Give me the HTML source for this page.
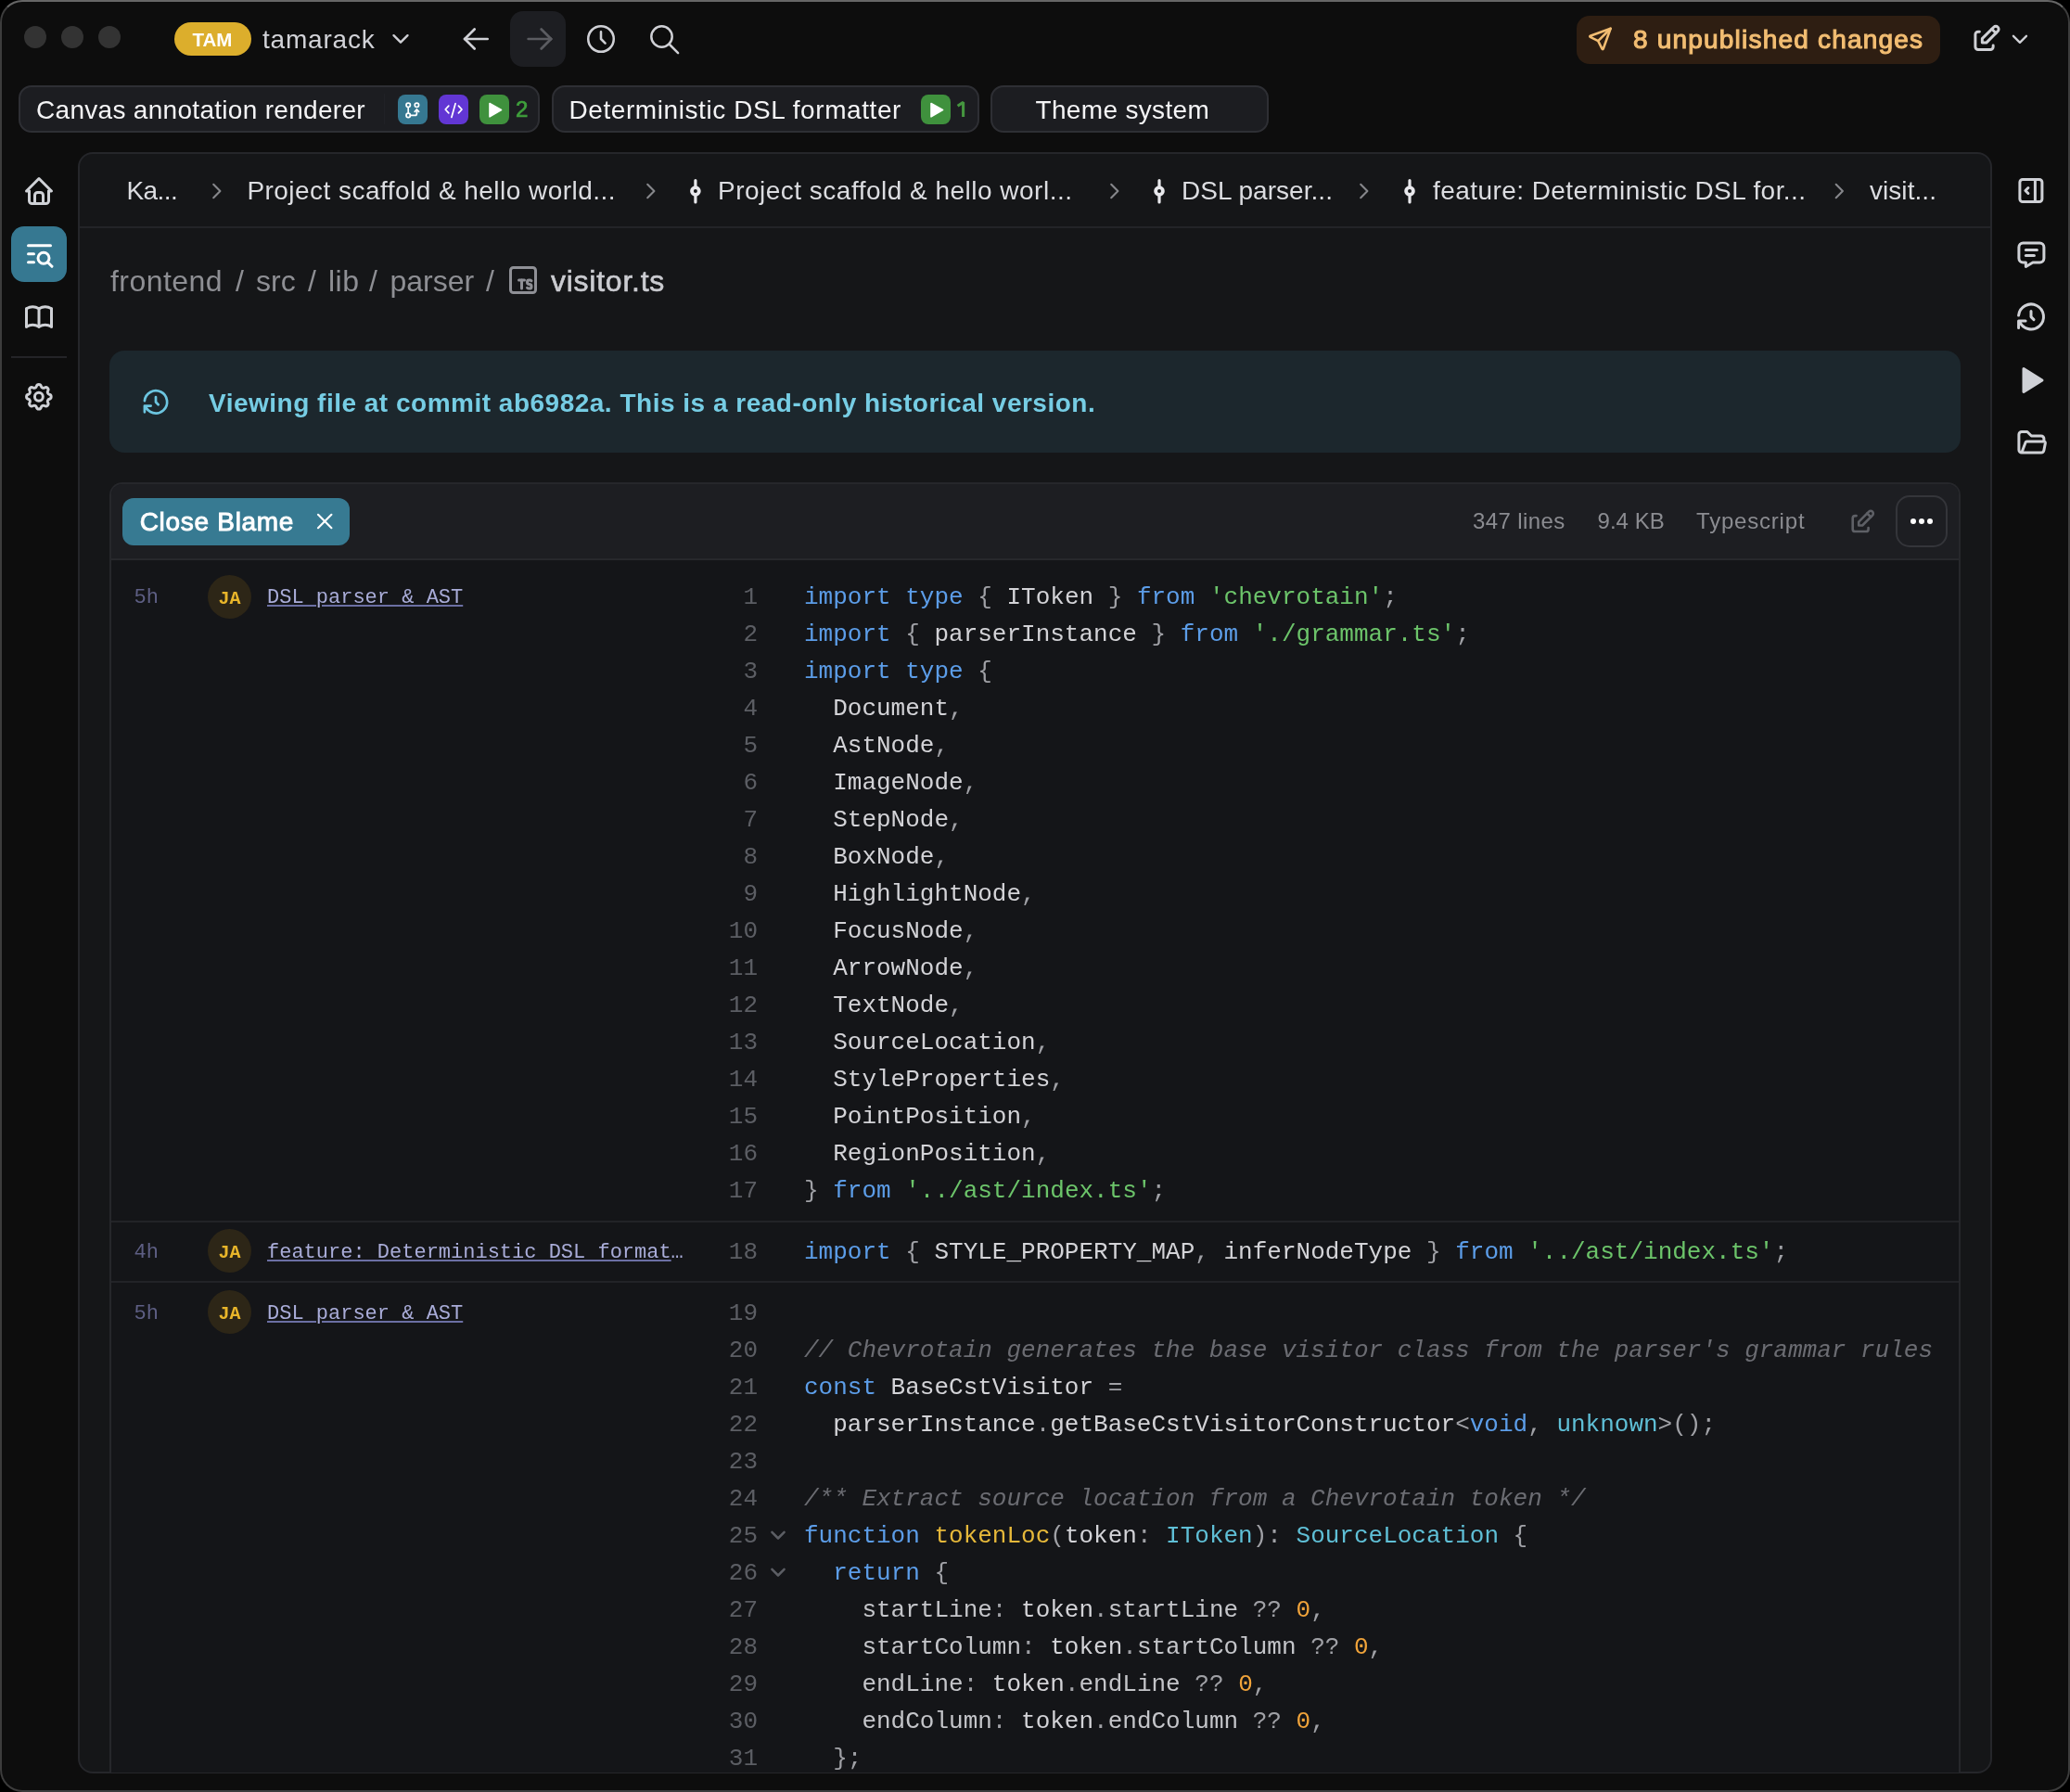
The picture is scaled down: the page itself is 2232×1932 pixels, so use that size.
<!DOCTYPE html>
<html><head><meta charset="utf-8"><style>
html,body{margin:0;padding:0;background:#000;}
body{width:2232px;height:1932px;position:relative;overflow:hidden;font-family:'Liberation Sans', sans-serif;will-change:transform;}
</style></head><body>
<div style="position:absolute;left:0px;top:0px;width:2232px;height:1932px;box-sizing:border-box;background:#0d0d0d;border:2px solid #3c3c3c;border-radius:24px;border-top-color:#666"></div>
<div style="position:absolute;left:26px;top:28px;width:24px;height:24px;border-radius:50%;background:#333"></div>
<div style="position:absolute;left:66px;top:28px;width:24px;height:24px;border-radius:50%;background:#333"></div>
<div style="position:absolute;left:106px;top:28px;width:24px;height:24px;border-radius:50%;background:#333"></div>
<div style="position:absolute;left:188px;top:24px;width:83px;height:36px;box-sizing:border-box;background:#dcae2c;border-radius:18px;"></div>
<div style="position:absolute;left:207.5px;top:32.65px;font-family:'Liberation Sans', sans-serif;font-size:20.5px;line-height:20.5px;color:#fff;font-weight:700;letter-spacing:0px;white-space:pre;">TAM</div>
<div style="position:absolute;left:283px;top:29.30px;font-family:'Liberation Sans', sans-serif;font-size:28px;line-height:28px;color:#d1d2d7;font-weight:400;letter-spacing:0.8px;white-space:pre;">tamarack</div>
<div style="position:absolute;left:550px;top:12px;width:60px;height:60px;box-sizing:border-box;background:#1d1e22;border-radius:14px;"></div>
<div style="position:absolute;left:1700px;top:17px;width:392px;height:52px;box-sizing:border-box;background:#2e1e12;border-radius:14px;"></div>
<div style="position:absolute;left:1761px;top:29.30px;font-family:'Liberation Sans', sans-serif;font-size:28px;line-height:28px;color:#f2bd72;font-weight:400;letter-spacing:1.2px;white-space:pre;-webkit-text-stroke:1.1px #f2bd72">8 unpublished changes</div>
<div style="position:absolute;left:20px;top:92px;width:562px;height:51px;box-sizing:border-box;background:#1c1d21;border:2px solid #2e2f34;border-radius:14px;"></div>
<div style="position:absolute;left:595px;top:92px;width:461px;height:51px;box-sizing:border-box;background:#1c1d21;border:2px solid #2e2f34;border-radius:14px;"></div>
<div style="position:absolute;left:1068px;top:92px;width:300px;height:51px;box-sizing:border-box;background:#1c1d21;border:2px solid #2e2f34;border-radius:14px;"></div>
<div style="position:absolute;left:39px;top:105.30px;font-family:'Liberation Sans', sans-serif;font-size:28px;line-height:28px;color:#f4f4f6;font-weight:400;letter-spacing:0.3px;white-space:pre;">Canvas annotation renderer</div>
<div style="position:absolute;left:414px;top:101px;width:1px;height:33px;background:#202126"></div>
<div style="position:absolute;left:429px;top:102px;width:32px;height:32px;box-sizing:border-box;background:#367891;border-radius:8px;"></div>
<div style="position:absolute;left:473px;top:102px;width:32px;height:32px;box-sizing:border-box;background:#6236d4;border-radius:8px;"></div>
<div style="position:absolute;left:517px;top:102px;width:32px;height:32px;box-sizing:border-box;background:#3f913d;border-radius:8px;"></div>
<div style="position:absolute;left:556px;top:105.68px;font-family:'Liberation Sans', sans-serif;font-size:24px;line-height:24px;color:#3fa03c;font-weight:400;letter-spacing:0px;white-space:pre;-webkit-text-stroke:0.7px #3fa03c">2</div>
<div style="position:absolute;left:613.5px;top:105.30px;font-family:'Liberation Sans', sans-serif;font-size:28px;line-height:28px;color:#f4f4f6;font-weight:400;letter-spacing:0.58px;white-space:pre;">Deterministic DSL formatter</div>
<div style="position:absolute;left:993px;top:102px;width:32px;height:32px;box-sizing:border-box;background:#3f913d;border-radius:8px;"></div>
<div style="position:absolute;left:1116.5px;top:105.30px;font-family:'Liberation Sans', sans-serif;font-size:28px;line-height:28px;color:#f4f4f6;font-weight:400;letter-spacing:0.33px;white-space:pre;">Theme system</div>
<div style="position:absolute;left:12px;top:244px;width:60px;height:60px;box-sizing:border-box;background:#367891;border-radius:14px;"></div>
<div style="position:absolute;left:12px;top:384px;width:60px;height:2px;background:#242428"></div>
<div style="position:absolute;left:84px;top:164px;width:2064px;height:1748px;box-sizing:border-box;background:#151618;border:2px solid #25262a;border-radius:16px;"></div>
<div style="position:absolute;left:86px;top:244px;width:2060px;height:2px;background:#232428"></div>
<div style="position:absolute;left:136.5px;top:192.00px;font-family:'Liberation Sans', sans-serif;font-size:28px;line-height:28px;color:#dcdde1;font-weight:400;letter-spacing:-0.6px;white-space:pre;">Ka...</div>
<div style="position:absolute;left:266.4px;top:192.00px;font-family:'Liberation Sans', sans-serif;font-size:28px;line-height:28px;color:#dcdde1;font-weight:400;letter-spacing:0.46px;white-space:pre;">Project scaffold &amp; hello world...</div>
<div style="position:absolute;left:774px;top:192.00px;font-family:'Liberation Sans', sans-serif;font-size:28px;line-height:28px;color:#dcdde1;font-weight:400;letter-spacing:0.49px;white-space:pre;">Project scaffold &amp; hello worl...</div>
<div style="position:absolute;left:1274px;top:192.00px;font-family:'Liberation Sans', sans-serif;font-size:28px;line-height:28px;color:#dcdde1;font-weight:400;letter-spacing:0.05px;white-space:pre;">DSL parser...</div>
<div style="position:absolute;left:1545px;top:192.00px;font-family:'Liberation Sans', sans-serif;font-size:28px;line-height:28px;color:#dcdde1;font-weight:400;letter-spacing:0.44px;white-space:pre;">feature: Deterministic DSL for...</div>
<div style="position:absolute;left:2016px;top:192.00px;font-family:'Liberation Sans', sans-serif;font-size:28px;line-height:28px;color:#dcdde1;font-weight:400;letter-spacing:0.05px;white-space:pre;">visit...</div>
<div style="position:absolute;left:119px;top:286.91px;font-family:'Liberation Sans', sans-serif;font-size:32px;line-height:32px;color:#8e8f94;font-weight:400;letter-spacing:0.45px;white-space:pre;">frontend</div>
<div style="position:absolute;left:254px;top:286.91px;font-family:'Liberation Sans', sans-serif;font-size:32px;line-height:32px;color:#8e8f94;font-weight:400;letter-spacing:0px;white-space:pre;">/</div>
<div style="position:absolute;left:276px;top:286.91px;font-family:'Liberation Sans', sans-serif;font-size:32px;line-height:32px;color:#8e8f94;font-weight:400;letter-spacing:0px;white-space:pre;">src</div>
<div style="position:absolute;left:332px;top:286.91px;font-family:'Liberation Sans', sans-serif;font-size:32px;line-height:32px;color:#8e8f94;font-weight:400;letter-spacing:0px;white-space:pre;">/</div>
<div style="position:absolute;left:354px;top:286.91px;font-family:'Liberation Sans', sans-serif;font-size:32px;line-height:32px;color:#8e8f94;font-weight:400;letter-spacing:0.5px;white-space:pre;">lib</div>
<div style="position:absolute;left:398px;top:286.91px;font-family:'Liberation Sans', sans-serif;font-size:32px;line-height:32px;color:#8e8f94;font-weight:400;letter-spacing:0px;white-space:pre;">/</div>
<div style="position:absolute;left:420.5px;top:286.91px;font-family:'Liberation Sans', sans-serif;font-size:32px;line-height:32px;color:#8e8f94;font-weight:400;letter-spacing:0px;white-space:pre;">parser</div>
<div style="position:absolute;left:524px;top:286.91px;font-family:'Liberation Sans', sans-serif;font-size:32px;line-height:32px;color:#8e8f94;font-weight:400;letter-spacing:0px;white-space:pre;">/</div>
<div style="position:absolute;left:594px;top:286.91px;font-family:'Liberation Sans', sans-serif;font-size:32px;line-height:32px;color:#cbccd1;font-weight:400;letter-spacing:0.75px;white-space:pre;-webkit-text-stroke:0.6px #cbccd1">visitor.ts</div>
<div style="position:absolute;left:118px;top:378px;width:1996px;height:110px;box-sizing:border-box;background:#1c272d;border-radius:16px;"></div>
<div style="position:absolute;left:225px;top:420.60px;font-family:'Liberation Sans', sans-serif;font-size:28px;line-height:28px;color:#76cde4;font-weight:700;letter-spacing:0.5px;white-space:pre;">Viewing file at commit ab6982a. This is a read-only historical version.</div>
<div style="position:absolute;left:118px;top:520px;width:1996px;height:1391px;box-sizing:border-box;border:2px solid #26272b;border-bottom:none;border-radius:14px 14px 0 0;background:#141518;overflow:hidden"><div style="position:absolute;left:0;top:0;right:0;height:80px;background:#1d1e22;border-bottom:2px solid #27282c"></div></div>
<div style="position:absolute;left:132px;top:537px;width:245px;height:51px;box-sizing:border-box;background:#377a92;border-radius:12px;"></div>
<div style="position:absolute;left:150.7px;top:548.80px;font-family:'Liberation Sans', sans-serif;font-size:28px;line-height:28px;color:#fff;font-weight:400;letter-spacing:0.7px;white-space:pre;-webkit-text-stroke:0.9px #fff">Close Blame</div>
<div style="position:absolute;left:1588px;top:550.18px;font-family:'Liberation Sans', sans-serif;font-size:24px;line-height:24px;color:#8b8c91;font-weight:400;letter-spacing:0.4px;white-space:pre;">347 lines</div>
<div style="position:absolute;left:1722.5px;top:550.18px;font-family:'Liberation Sans', sans-serif;font-size:24px;line-height:24px;color:#8b8c91;font-weight:400;letter-spacing:0.05px;white-space:pre;">9.4 KB</div>
<div style="position:absolute;left:1829px;top:550.18px;font-family:'Liberation Sans', sans-serif;font-size:24px;line-height:24px;color:#8b8c91;font-weight:400;letter-spacing:0.8px;white-space:pre;">Typescript</div>
<div style="position:absolute;left:2044px;top:534px;width:56px;height:56px;box-sizing:border-box;background:transparent;border:2px solid #34353a;border-radius:15px;"></div>
<div style="position:absolute;left:2059.5px;top:559px;width:6px;height:6px;border-radius:50%;background:#fff"></div>
<div style="position:absolute;left:2068.5px;top:559px;width:6px;height:6px;border-radius:50%;background:#fff"></div>
<div style="position:absolute;left:2077.5px;top:559px;width:6px;height:6px;border-radius:50%;background:#fff"></div>
<div style="position:absolute;left:120px;top:1316px;width:1992px;height:2px;background:#222327"></div>
<div style="position:absolute;left:120px;top:1381px;width:1992px;height:2px;background:#222327"></div>
<div style="position:absolute;left:717px;width:100px;top:624.07px;height:40px;line-height:40px;text-align:right;font-family:'Liberation Mono', monospace;font-size:26px;color:#5c5e64">1</div>
<div style="position:absolute;left:867px;top:624.07px;height:40px;line-height:40px;font-family:'Liberation Mono', monospace;font-size:26px;white-space:pre"><span style="color:#5c9de8">import</span><span style="color:#d3d3d7"> </span><span style="color:#5c9de8">type</span><span style="color:#a0a1a6"> { </span><span style="color:#d3d3d7">IToken</span><span style="color:#a0a1a6"> } </span><span style="color:#5c9de8">from</span><span style="color:#d3d3d7"> </span><span style="color:#6cc46a">'chevrotain'</span><span style="color:#a0a1a6">;</span></div>
<div style="position:absolute;left:717px;width:100px;top:664.07px;height:40px;line-height:40px;text-align:right;font-family:'Liberation Mono', monospace;font-size:26px;color:#5c5e64">2</div>
<div style="position:absolute;left:867px;top:664.07px;height:40px;line-height:40px;font-family:'Liberation Mono', monospace;font-size:26px;white-space:pre"><span style="color:#5c9de8">import</span><span style="color:#a0a1a6"> { </span><span style="color:#d3d3d7">parserInstance</span><span style="color:#a0a1a6"> } </span><span style="color:#5c9de8">from</span><span style="color:#d3d3d7"> </span><span style="color:#6cc46a">'./grammar.ts'</span><span style="color:#a0a1a6">;</span></div>
<div style="position:absolute;left:717px;width:100px;top:704.07px;height:40px;line-height:40px;text-align:right;font-family:'Liberation Mono', monospace;font-size:26px;color:#5c5e64">3</div>
<div style="position:absolute;left:867px;top:704.07px;height:40px;line-height:40px;font-family:'Liberation Mono', monospace;font-size:26px;white-space:pre"><span style="color:#5c9de8">import</span><span style="color:#d3d3d7"> </span><span style="color:#5c9de8">type</span><span style="color:#a0a1a6"> {</span></div>
<div style="position:absolute;left:717px;width:100px;top:744.07px;height:40px;line-height:40px;text-align:right;font-family:'Liberation Mono', monospace;font-size:26px;color:#5c5e64">4</div>
<div style="position:absolute;left:867px;top:744.07px;height:40px;line-height:40px;font-family:'Liberation Mono', monospace;font-size:26px;white-space:pre"><span style="color:#d3d3d7">  Document</span><span style="color:#a0a1a6">,</span></div>
<div style="position:absolute;left:717px;width:100px;top:784.07px;height:40px;line-height:40px;text-align:right;font-family:'Liberation Mono', monospace;font-size:26px;color:#5c5e64">5</div>
<div style="position:absolute;left:867px;top:784.07px;height:40px;line-height:40px;font-family:'Liberation Mono', monospace;font-size:26px;white-space:pre"><span style="color:#d3d3d7">  AstNode</span><span style="color:#a0a1a6">,</span></div>
<div style="position:absolute;left:717px;width:100px;top:824.07px;height:40px;line-height:40px;text-align:right;font-family:'Liberation Mono', monospace;font-size:26px;color:#5c5e64">6</div>
<div style="position:absolute;left:867px;top:824.07px;height:40px;line-height:40px;font-family:'Liberation Mono', monospace;font-size:26px;white-space:pre"><span style="color:#d3d3d7">  ImageNode</span><span style="color:#a0a1a6">,</span></div>
<div style="position:absolute;left:717px;width:100px;top:864.07px;height:40px;line-height:40px;text-align:right;font-family:'Liberation Mono', monospace;font-size:26px;color:#5c5e64">7</div>
<div style="position:absolute;left:867px;top:864.07px;height:40px;line-height:40px;font-family:'Liberation Mono', monospace;font-size:26px;white-space:pre"><span style="color:#d3d3d7">  StepNode</span><span style="color:#a0a1a6">,</span></div>
<div style="position:absolute;left:717px;width:100px;top:904.07px;height:40px;line-height:40px;text-align:right;font-family:'Liberation Mono', monospace;font-size:26px;color:#5c5e64">8</div>
<div style="position:absolute;left:867px;top:904.07px;height:40px;line-height:40px;font-family:'Liberation Mono', monospace;font-size:26px;white-space:pre"><span style="color:#d3d3d7">  BoxNode</span><span style="color:#a0a1a6">,</span></div>
<div style="position:absolute;left:717px;width:100px;top:944.07px;height:40px;line-height:40px;text-align:right;font-family:'Liberation Mono', monospace;font-size:26px;color:#5c5e64">9</div>
<div style="position:absolute;left:867px;top:944.07px;height:40px;line-height:40px;font-family:'Liberation Mono', monospace;font-size:26px;white-space:pre"><span style="color:#d3d3d7">  HighlightNode</span><span style="color:#a0a1a6">,</span></div>
<div style="position:absolute;left:717px;width:100px;top:984.07px;height:40px;line-height:40px;text-align:right;font-family:'Liberation Mono', monospace;font-size:26px;color:#5c5e64">10</div>
<div style="position:absolute;left:867px;top:984.07px;height:40px;line-height:40px;font-family:'Liberation Mono', monospace;font-size:26px;white-space:pre"><span style="color:#d3d3d7">  FocusNode</span><span style="color:#a0a1a6">,</span></div>
<div style="position:absolute;left:717px;width:100px;top:1024.07px;height:40px;line-height:40px;text-align:right;font-family:'Liberation Mono', monospace;font-size:26px;color:#5c5e64">11</div>
<div style="position:absolute;left:867px;top:1024.07px;height:40px;line-height:40px;font-family:'Liberation Mono', monospace;font-size:26px;white-space:pre"><span style="color:#d3d3d7">  ArrowNode</span><span style="color:#a0a1a6">,</span></div>
<div style="position:absolute;left:717px;width:100px;top:1064.07px;height:40px;line-height:40px;text-align:right;font-family:'Liberation Mono', monospace;font-size:26px;color:#5c5e64">12</div>
<div style="position:absolute;left:867px;top:1064.07px;height:40px;line-height:40px;font-family:'Liberation Mono', monospace;font-size:26px;white-space:pre"><span style="color:#d3d3d7">  TextNode</span><span style="color:#a0a1a6">,</span></div>
<div style="position:absolute;left:717px;width:100px;top:1104.07px;height:40px;line-height:40px;text-align:right;font-family:'Liberation Mono', monospace;font-size:26px;color:#5c5e64">13</div>
<div style="position:absolute;left:867px;top:1104.07px;height:40px;line-height:40px;font-family:'Liberation Mono', monospace;font-size:26px;white-space:pre"><span style="color:#d3d3d7">  SourceLocation</span><span style="color:#a0a1a6">,</span></div>
<div style="position:absolute;left:717px;width:100px;top:1144.07px;height:40px;line-height:40px;text-align:right;font-family:'Liberation Mono', monospace;font-size:26px;color:#5c5e64">14</div>
<div style="position:absolute;left:867px;top:1144.07px;height:40px;line-height:40px;font-family:'Liberation Mono', monospace;font-size:26px;white-space:pre"><span style="color:#d3d3d7">  StyleProperties</span><span style="color:#a0a1a6">,</span></div>
<div style="position:absolute;left:717px;width:100px;top:1184.07px;height:40px;line-height:40px;text-align:right;font-family:'Liberation Mono', monospace;font-size:26px;color:#5c5e64">15</div>
<div style="position:absolute;left:867px;top:1184.07px;height:40px;line-height:40px;font-family:'Liberation Mono', monospace;font-size:26px;white-space:pre"><span style="color:#d3d3d7">  PointPosition</span><span style="color:#a0a1a6">,</span></div>
<div style="position:absolute;left:717px;width:100px;top:1224.07px;height:40px;line-height:40px;text-align:right;font-family:'Liberation Mono', monospace;font-size:26px;color:#5c5e64">16</div>
<div style="position:absolute;left:867px;top:1224.07px;height:40px;line-height:40px;font-family:'Liberation Mono', monospace;font-size:26px;white-space:pre"><span style="color:#d3d3d7">  RegionPosition</span><span style="color:#a0a1a6">,</span></div>
<div style="position:absolute;left:717px;width:100px;top:1264.07px;height:40px;line-height:40px;text-align:right;font-family:'Liberation Mono', monospace;font-size:26px;color:#5c5e64">17</div>
<div style="position:absolute;left:867px;top:1264.07px;height:40px;line-height:40px;font-family:'Liberation Mono', monospace;font-size:26px;white-space:pre"><span style="color:#a0a1a6">} </span><span style="color:#5c9de8">from</span><span style="color:#d3d3d7"> </span><span style="color:#6cc46a">'../ast/index.ts'</span><span style="color:#a0a1a6">;</span></div>
<div style="position:absolute;left:717px;width:100px;top:1329.87px;height:40px;line-height:40px;text-align:right;font-family:'Liberation Mono', monospace;font-size:26px;color:#5c5e64">18</div>
<div style="position:absolute;left:867px;top:1329.87px;height:40px;line-height:40px;font-family:'Liberation Mono', monospace;font-size:26px;white-space:pre"><span style="color:#5c9de8">import</span><span style="color:#a0a1a6"> { </span><span style="color:#d3d3d7">STYLE_PROPERTY_MAP</span><span style="color:#a0a1a6">, </span><span style="color:#d3d3d7">inferNodeType</span><span style="color:#a0a1a6"> } </span><span style="color:#5c9de8">from</span><span style="color:#d3d3d7"> </span><span style="color:#6cc46a">'../ast/index.ts'</span><span style="color:#a0a1a6">;</span></div>
<div style="position:absolute;left:717px;width:100px;top:1395.87px;height:40px;line-height:40px;text-align:right;font-family:'Liberation Mono', monospace;font-size:26px;color:#5c5e64">19</div>
<div style="position:absolute;left:867px;top:1395.87px;height:40px;line-height:40px;font-family:'Liberation Mono', monospace;font-size:26px;white-space:pre"></div>
<div style="position:absolute;left:717px;width:100px;top:1435.87px;height:40px;line-height:40px;text-align:right;font-family:'Liberation Mono', monospace;font-size:26px;color:#5c5e64">20</div>
<div style="position:absolute;left:867px;top:1435.87px;height:40px;line-height:40px;font-family:'Liberation Mono', monospace;font-size:26px;white-space:pre"><span style="color:#6b6c72;font-style:italic">// Chevrotain generates the base visitor class from the parser's grammar rules</span></div>
<div style="position:absolute;left:717px;width:100px;top:1475.87px;height:40px;line-height:40px;text-align:right;font-family:'Liberation Mono', monospace;font-size:26px;color:#5c5e64">21</div>
<div style="position:absolute;left:867px;top:1475.87px;height:40px;line-height:40px;font-family:'Liberation Mono', monospace;font-size:26px;white-space:pre"><span style="color:#5c9de8">const</span><span style="color:#d3d3d7"> BaseCstVisitor </span><span style="color:#a0a1a6">=</span></div>
<div style="position:absolute;left:717px;width:100px;top:1515.87px;height:40px;line-height:40px;text-align:right;font-family:'Liberation Mono', monospace;font-size:26px;color:#5c5e64">22</div>
<div style="position:absolute;left:867px;top:1515.87px;height:40px;line-height:40px;font-family:'Liberation Mono', monospace;font-size:26px;white-space:pre"><span style="color:#d3d3d7">  parserInstance</span><span style="color:#a0a1a6">.</span><span style="color:#d3d3d7">getBaseCstVisitorConstructor</span><span style="color:#a0a1a6">&lt;</span><span style="color:#5c9de8">void</span><span style="color:#a0a1a6">, </span><span style="color:#5fbfd6">unknown</span><span style="color:#a0a1a6">&gt;();</span></div>
<div style="position:absolute;left:717px;width:100px;top:1555.87px;height:40px;line-height:40px;text-align:right;font-family:'Liberation Mono', monospace;font-size:26px;color:#5c5e64">23</div>
<div style="position:absolute;left:867px;top:1555.87px;height:40px;line-height:40px;font-family:'Liberation Mono', monospace;font-size:26px;white-space:pre"></div>
<div style="position:absolute;left:717px;width:100px;top:1595.87px;height:40px;line-height:40px;text-align:right;font-family:'Liberation Mono', monospace;font-size:26px;color:#5c5e64">24</div>
<div style="position:absolute;left:867px;top:1595.87px;height:40px;line-height:40px;font-family:'Liberation Mono', monospace;font-size:26px;white-space:pre"><span style="color:#6b6c72;font-style:italic">/** Extract source location from a Chevrotain token */</span></div>
<div style="position:absolute;left:717px;width:100px;top:1635.87px;height:40px;line-height:40px;text-align:right;font-family:'Liberation Mono', monospace;font-size:26px;color:#5c5e64">25</div>
<div style="position:absolute;left:867px;top:1635.87px;height:40px;line-height:40px;font-family:'Liberation Mono', monospace;font-size:26px;white-space:pre"><span style="color:#5c9de8">function</span><span style="color:#d3d3d7"> </span><span style="color:#e6b83a">tokenLoc</span><span style="color:#a0a1a6">(</span><span style="color:#d3d3d7">token</span><span style="color:#a0a1a6">: </span><span style="color:#5fbfd6">IToken</span><span style="color:#a0a1a6">): </span><span style="color:#5fbfd6">SourceLocation</span><span style="color:#a0a1a6"> {</span></div>
<div style="position:absolute;left:717px;width:100px;top:1675.87px;height:40px;line-height:40px;text-align:right;font-family:'Liberation Mono', monospace;font-size:26px;color:#5c5e64">26</div>
<div style="position:absolute;left:867px;top:1675.87px;height:40px;line-height:40px;font-family:'Liberation Mono', monospace;font-size:26px;white-space:pre"><span style="color:#d3d3d7">  </span><span style="color:#5c9de8">return</span><span style="color:#a0a1a6"> {</span></div>
<div style="position:absolute;left:717px;width:100px;top:1715.87px;height:40px;line-height:40px;text-align:right;font-family:'Liberation Mono', monospace;font-size:26px;color:#5c5e64">27</div>
<div style="position:absolute;left:867px;top:1715.87px;height:40px;line-height:40px;font-family:'Liberation Mono', monospace;font-size:26px;white-space:pre"><span style="color:#c4c5c9">    startLine</span><span style="color:#a0a1a6">: </span><span style="color:#d3d3d7">token</span><span style="color:#a0a1a6">.</span><span style="color:#c4c5c9">startLine</span><span style="color:#a0a1a6"> ?? </span><span style="color:#f0a33a">0</span><span style="color:#a0a1a6">,</span></div>
<div style="position:absolute;left:717px;width:100px;top:1755.87px;height:40px;line-height:40px;text-align:right;font-family:'Liberation Mono', monospace;font-size:26px;color:#5c5e64">28</div>
<div style="position:absolute;left:867px;top:1755.87px;height:40px;line-height:40px;font-family:'Liberation Mono', monospace;font-size:26px;white-space:pre"><span style="color:#c4c5c9">    startColumn</span><span style="color:#a0a1a6">: </span><span style="color:#d3d3d7">token</span><span style="color:#a0a1a6">.</span><span style="color:#c4c5c9">startColumn</span><span style="color:#a0a1a6"> ?? </span><span style="color:#f0a33a">0</span><span style="color:#a0a1a6">,</span></div>
<div style="position:absolute;left:717px;width:100px;top:1795.87px;height:40px;line-height:40px;text-align:right;font-family:'Liberation Mono', monospace;font-size:26px;color:#5c5e64">29</div>
<div style="position:absolute;left:867px;top:1795.87px;height:40px;line-height:40px;font-family:'Liberation Mono', monospace;font-size:26px;white-space:pre"><span style="color:#c4c5c9">    endLine</span><span style="color:#a0a1a6">: </span><span style="color:#d3d3d7">token</span><span style="color:#a0a1a6">.</span><span style="color:#c4c5c9">endLine</span><span style="color:#a0a1a6"> ?? </span><span style="color:#f0a33a">0</span><span style="color:#a0a1a6">,</span></div>
<div style="position:absolute;left:717px;width:100px;top:1835.87px;height:40px;line-height:40px;text-align:right;font-family:'Liberation Mono', monospace;font-size:26px;color:#5c5e64">30</div>
<div style="position:absolute;left:867px;top:1835.87px;height:40px;line-height:40px;font-family:'Liberation Mono', monospace;font-size:26px;white-space:pre"><span style="color:#c4c5c9">    endColumn</span><span style="color:#a0a1a6">: </span><span style="color:#d3d3d7">token</span><span style="color:#a0a1a6">.</span><span style="color:#c4c5c9">endColumn</span><span style="color:#a0a1a6"> ?? </span><span style="color:#f0a33a">0</span><span style="color:#a0a1a6">,</span></div>
<div style="position:absolute;left:717px;width:100px;top:1875.87px;height:40px;line-height:40px;text-align:right;font-family:'Liberation Mono', monospace;font-size:26px;color:#5c5e64">31</div>
<div style="position:absolute;left:867px;top:1875.87px;height:40px;line-height:40px;font-family:'Liberation Mono', monospace;font-size:26px;white-space:pre"><span style="color:#a0a1a6">  };</span></div>
<div style="position:absolute;left:144.5px;top:634.14px;font-family:'Liberation Mono', monospace;font-size:22px;line-height:22px;color:#5e5f84;font-weight:400;letter-spacing:0px;white-space:pre;">5h</div>
<div style="position:absolute;left:224px;top:619.6px;width:47px;height:47px;border-radius:50%;background:#2d2617"></div>
<div style="position:absolute;left:235.5px;top:635.67px;font-family:'Liberation Mono', monospace;font-size:20px;line-height:20px;color:#e8b52a;font-weight:700;letter-spacing:0px;white-space:pre;">JA</div>
<div style="position:absolute;left:288px;top:634.14px;font-family:'Liberation Mono', monospace;font-size:22px;line-height:22px;color:#a9acd8;font-weight:400;letter-spacing:0px;white-space:pre;text-decoration:underline;text-underline-offset:2px;text-decoration-thickness:2px;text-decoration-color:#6b6fa3">DSL parser &amp; AST</div>
<div style="position:absolute;left:144.5px;top:1339.94px;font-family:'Liberation Mono', monospace;font-size:22px;line-height:22px;color:#5e5f84;font-weight:400;letter-spacing:0px;white-space:pre;">4h</div>
<div style="position:absolute;left:224px;top:1325.4px;width:47px;height:47px;border-radius:50%;background:#2d2617"></div>
<div style="position:absolute;left:235.5px;top:1341.47px;font-family:'Liberation Mono', monospace;font-size:20px;line-height:20px;color:#e8b52a;font-weight:700;letter-spacing:0px;white-space:pre;">JA</div>
<div style="position:absolute;left:288px;top:1339.94px;font-family:'Liberation Mono', monospace;font-size:22px;line-height:22px;color:#a9acd8;font-weight:400;letter-spacing:0px;white-space:pre;text-decoration:underline;text-underline-offset:2px;text-decoration-thickness:2px;text-decoration-color:#6b6fa3">feature: Deterministic DSL format</div>
<div style="position:absolute;left:723.5999999999999px;top:1339.94px;font-family:'Liberation Mono', monospace;font-size:22px;line-height:22px;color:#a9acd8;font-weight:400;letter-spacing:0px;white-space:pre;">…</div>
<div style="position:absolute;left:144.5px;top:1405.94px;font-family:'Liberation Mono', monospace;font-size:22px;line-height:22px;color:#5e5f84;font-weight:400;letter-spacing:0px;white-space:pre;">5h</div>
<div style="position:absolute;left:224px;top:1391.4px;width:47px;height:47px;border-radius:50%;background:#2d2617"></div>
<div style="position:absolute;left:235.5px;top:1407.47px;font-family:'Liberation Mono', monospace;font-size:20px;line-height:20px;color:#e8b52a;font-weight:700;letter-spacing:0px;white-space:pre;">JA</div>
<div style="position:absolute;left:288px;top:1405.94px;font-family:'Liberation Mono', monospace;font-size:22px;line-height:22px;color:#a9acd8;font-weight:400;letter-spacing:0px;white-space:pre;text-decoration:underline;text-underline-offset:2px;text-decoration-thickness:2px;text-decoration-color:#6b6fa3">DSL parser &amp; AST</div>
<svg style="position:absolute;left:0;top:0" width="2232" height="1932" viewBox="0 0 2232 1932"><g transform="translate(417 26.9) scale(1.25)" fill="none" stroke="#cfd0d5" stroke-width="1.9" stroke-linecap="round" stroke-linejoin="round" ><path d="M6 9l6 6l6 -6"/></g>
<g transform="translate(492.40000000000003 21.0) scale(1.75)" fill="none" stroke="#d0d1d6" stroke-width="1.55" stroke-linecap="round" stroke-linejoin="round" ><path d="M5 12l14 0"/><path d="M5 12l6 6"/><path d="M5 12l6 -6"/></g>
<g transform="translate(560.9 21.0) scale(1.75)" fill="none" stroke="#5b5c61" stroke-width="1.55" stroke-linecap="round" stroke-linejoin="round" ><path d="M5 12l14 0"/><path d="M13 18l6 -6"/><path d="M13 6l6 6"/></g>
<g transform="translate(629.64 23.64) scale(1.53)" fill="none" stroke="#cfd0d5" stroke-width="1.65" stroke-linecap="round" stroke-linejoin="round" ><path d="M3 12a9 9 0 1 0 18 0a9 9 0 0 0 -18 0"/><path d="M12 7v5l3 3"/></g>
<g transform="translate(697.5 23.5) scale(1.6)" fill="none" stroke="#cfd0d5" stroke-width="1.55" stroke-linecap="round" stroke-linejoin="round" ><path d="M10 10m-7 0a7 7 0 1 0 14 0a7 7 0 1 0 -14 0"/><path d="M21 21l-6 -6"/></g>
<g transform="translate(1711 27.1) scale(1.22)" fill="none" stroke="#f2bd72" stroke-width="2.1" stroke-linecap="round" stroke-linejoin="round" ><path d="M10 14l11 -11"/><path d="M21 3l-6.5 18a.55 .55 0 0 1 -1 0l-3.5 -7l-7 -3.5a.55 .55 0 0 1 0 -1l18 -6.5"/></g>
<g transform="translate(2124 23.9) scale(1.48)" fill="none" stroke="#cfd0d5" stroke-width="2" stroke-linecap="round" stroke-linejoin="round" ><path d="M7 7h-1a2 2 0 0 0 -2 2v9a2 2 0 0 0 2 2h9a2 2 0 0 0 2 -2v-1"/><path d="M20.385 6.585a2.1 2.1 0 0 0 -2.97 -2.97l-8.415 8.385v3h3l8.385 -8.415z"/><path d="M16 5l3 3"/></g>
<g transform="translate(2163.9 28.3) scale(1.17)" fill="none" stroke="#cfd0d5" stroke-width="2.0" stroke-linecap="round" stroke-linejoin="round" ><path d="M6 9l6 6l6 -6"/></g>
<path d="M1038.6 126V110.3L1032.6 114.3" fill="none" stroke="#45963f" stroke-width="3.1" stroke-linejoin="bevel"/>
<g fill="none" stroke="#fff" stroke-width="1.7" stroke-linecap="round" stroke-linejoin="round"><circle cx="440.2" cy="113.3" r="2.2"/><circle cx="449.4" cy="113.3" r="2.2"/><circle cx="440.2" cy="124.4" r="2.2"/><path d="M440.2 115.5v6.7"/><path d="M442.4 124.4h5a2 2 0 0 0 2 -2v-4.2"/><path d="M447.2 120.4l2.2 -2.2l2.2 2.2"/><path d="M483.8 114.2l-3.6 3.8l3.6 3.8"/><path d="M494.4 114.2l3.6 3.8l-3.6 3.8"/><path d="M491.1 111.5l-4.2 15"/></g>
<path d="M528 111.5 L540.5 118.5 L528 125.8 Z" fill="#fff" stroke="#fff" stroke-width="1.6" stroke-linejoin="round"/>
<path d="M1004 111.5 L1016.5 118.5 L1004 125.8 Z" fill="#fff" stroke="#fff" stroke-width="1.6" stroke-linejoin="round"/>
<g transform="translate(24 188) scale(1.5)" fill="none" stroke="#cfd1d6" stroke-width="2" stroke-linecap="round" stroke-linejoin="round" ><path d="M5 12l-2 0l9 -9l9 9l-2 0"/><path d="M5 12v7a2 2 0 0 0 2 2h10a2 2 0 0 0 2 -2v-7"/><path d="M9 21v-6a2 2 0 0 1 2 -2h2a2 2 0 0 1 2 2v6"/></g>
<g transform="translate(24.5 255.8) scale(1.5)" fill="none" stroke="#fff" stroke-width="2" stroke-linecap="round" stroke-linejoin="round" ><path d="M15 15m-4 0a4 4 0 1 0 8 0a4 4 0 1 0 -8 0"/><path d="M18.5 18.5l2.5 2.5"/><path d="M4 6h16"/><path d="M4 12h4"/><path d="M4 18h4"/></g>
<g transform="translate(24 323.8) scale(1.5)" fill="none" stroke="#cfd1d6" stroke-width="2" stroke-linecap="round" stroke-linejoin="round" ><path d="M3 19a9 9 0 0 1 9 0a9 9 0 0 1 9 0"/><path d="M3 6a9 9 0 0 1 9 0a9 9 0 0 1 9 0"/><path d="M3 6l0 13"/><path d="M12 6l0 13"/><path d="M21 6l0 13"/></g>
<g transform="translate(24.1 410) scale(1.48)" fill="none" stroke="#cfd1d6" stroke-width="2" stroke-linecap="round" stroke-linejoin="round" ><path d="M10.325 4.317c.426 -1.756 2.924 -1.756 3.35 0a1.724 1.724 0 0 0 2.573 1.066c1.543 -.94 3.31 .826 2.37 2.37a1.724 1.724 0 0 0 1.065 2.572c1.756 .426 1.756 2.924 0 3.35a1.724 1.724 0 0 0 -1.066 2.573c.94 1.543 -.826 3.31 -2.37 2.37a1.724 1.724 0 0 0 -2.572 1.065c-.426 1.756 -2.924 1.756 -3.35 0a1.724 1.724 0 0 0 -2.573 -1.066c-1.543 .94 -3.31 -.826 -2.37 -2.37a1.724 1.724 0 0 0 -1.065 -2.572c-1.756 -.426 -1.756 -2.924 0 -3.35a1.724 1.724 0 0 0 1.066 -2.573c-.94 -1.543 .826 -3.31 2.37 -2.37c1 .608 2.296 .07 2.572 -1.065z"/><path d="M9 12a3 3 0 1 0 6 0a3 3 0 0 0 -6 0"/></g>
<g transform="translate(2171.9 187.5) scale(1.5)" fill="none" stroke="#cfd1d6" stroke-width="2" stroke-linecap="round" stroke-linejoin="round" ><path d="M4 4m0 2a2 2 0 0 1 2 -2h12a2 2 0 0 1 2 2v12a2 2 0 0 1 -2 2h-12a2 2 0 0 1 -2 -2z"/><path d="M15 4v16"/><path d="M10 10l-2 2l2 2"/></g>
<g transform="translate(2172.4 256) scale(1.5)" fill="none" stroke="#cfd1d6" stroke-width="2" stroke-linecap="round" stroke-linejoin="round" ><path d="M8 9h8"/><path d="M8 13h6"/><path d="M18 4a3 3 0 0 1 3 3v8a3 3 0 0 1 -3 3h-5l-5 3v-3h-2a3 3 0 0 1 -3 -3v-8a3 3 0 0 1 3 -3h12z"/></g>
<g transform="translate(2172 323.6) scale(1.5)" fill="none" stroke="#cfd1d6" stroke-width="2" stroke-linecap="round" stroke-linejoin="round" ><path d="M12 8l0 4l2 2"/><path d="M3.05 11a9 9 0 1 1 .5 4m-.5 5v-5h5"/></g>
<path d="M2182 397.5 L2202 410 L2182 422.5 Z" fill="#cfd1d6" stroke="#cfd1d6" stroke-width="3" stroke-linejoin="round"/>
<g transform="translate(2172.4 459.5) scale(1.5)" fill="none" stroke="#cfd1d6" stroke-width="2" stroke-linecap="round" stroke-linejoin="round" ><path d="M5 19l2.757 -7.351a1 1 0 0 1 .936 -.649h12.307a1 1 0 0 1 .986 1.164l-.996 5.211a2 2 0 0 1 -1.964 1.625h-14.026a2 2 0 0 1 -2 -2v-11a2 2 0 0 1 2 -2h4l3 3h7a2 2 0 0 1 2 2v2"/></g>
<g transform="translate(219.39999999999998 191.6) scale(1.2)" fill="none" stroke="#86878b" stroke-width="1.75" stroke-linecap="round" stroke-linejoin="round" ><path d="M9 6l6 6l-6 6"/></g>
<g transform="translate(687.4000000000001 191.6) scale(1.2)" fill="none" stroke="#86878b" stroke-width="1.75" stroke-linecap="round" stroke-linejoin="round" ><path d="M9 6l6 6l-6 6"/></g>
<g fill="none" stroke="#e8e8ec" stroke-linecap="round"><circle cx="749.9" cy="206" r="3.9" stroke-width="3.8"/><path stroke-width="3.2" d="M749.9 194.5v7.2M749.9 210.5v7.5"/></g>
<g transform="translate(1187.4 191.6) scale(1.2)" fill="none" stroke="#86878b" stroke-width="1.75" stroke-linecap="round" stroke-linejoin="round" ><path d="M9 6l6 6l-6 6"/></g>
<g fill="none" stroke="#e8e8ec" stroke-linecap="round"><circle cx="1250" cy="206" r="3.9" stroke-width="3.8"/><path stroke-width="3.2" d="M1250 194.5v7.2M1250 210.5v7.5"/></g>
<g transform="translate(1456.4 191.6) scale(1.2)" fill="none" stroke="#86878b" stroke-width="1.75" stroke-linecap="round" stroke-linejoin="round" ><path d="M9 6l6 6l-6 6"/></g>
<g fill="none" stroke="#e8e8ec" stroke-linecap="round"><circle cx="1520" cy="206" r="3.9" stroke-width="3.8"/><path stroke-width="3.2" d="M1520 194.5v7.2M1520 210.5v7.5"/></g>
<g transform="translate(1968.9 191.6) scale(1.2)" fill="none" stroke="#86878b" stroke-width="1.75" stroke-linecap="round" stroke-linejoin="round" ><path d="M9 6l6 6l-6 6"/></g>
<g transform="translate(546 284) scale(1.5)" fill="none" stroke="#8f9096" stroke-width="2" stroke-linecap="round" stroke-linejoin="round" ><path d="M15 17.5c.32 .32 .754 .5 1.207 .5h.543c.69 0 1.25 -.56 1.25 -1.25v-.25a1.5 1.5 0 0 0 -1.5 -1.5a1.5 1.5 0 0 1 -1.5 -1.5v-.25c0 -.69 .56 -1.25 1.25 -1.25h.543c.453 0 .887 .18 1.207 .5"/><path d="M9 12h4"/><path d="M11 12v6"/><path d="M21 19v-14a2 2 0 0 0 -2 -2h-14a2 2 0 0 0 -2 2v14a2 2 0 0 0 2 2h14a2 2 0 0 0 2 -2z"/></g>
<g transform="translate(151.8 417.3) scale(1.35)" fill="none" stroke="#6cc5e0" stroke-width="2" stroke-linecap="round" stroke-linejoin="round" ><path d="M12 8l0 4l2 2"/><path d="M3.05 11a9 9 0 1 1 .5 4m-.5 5v-5h5"/></g>
<g transform="translate(335.8 547.6) scale(1.2)" fill="none" stroke="#fff" stroke-width="1.8" stroke-linecap="round" stroke-linejoin="round" ><path d="M18 6l-12 12"/><path d="M6 6l12 12"/></g>
<g transform="translate(1992.5 547) scale(1.3)" fill="none" stroke="#5e6066" stroke-width="2" stroke-linecap="round" stroke-linejoin="round" ><path d="M7 7h-1a2 2 0 0 0 -2 2v9a2 2 0 0 0 2 2h9a2 2 0 0 0 2 -2v-1"/><path d="M20.385 6.585a2.1 2.1 0 0 0 -2.97 -2.97l-8.415 8.385v3h3l8.385 -8.415z"/><path d="M16 5l3 3"/></g>
<g transform="translate(825.8 1642.0) scale(1.1)" fill="none" stroke="#5c5e64" stroke-width="2.3" stroke-linecap="round" stroke-linejoin="round" ><path d="M6 9l6 6l6 -6"/></g>
<g transform="translate(825.8 1682.0) scale(1.1)" fill="none" stroke="#5c5e64" stroke-width="2.3" stroke-linecap="round" stroke-linejoin="round" ><path d="M6 9l6 6l6 -6"/></g></svg>
</body></html>
